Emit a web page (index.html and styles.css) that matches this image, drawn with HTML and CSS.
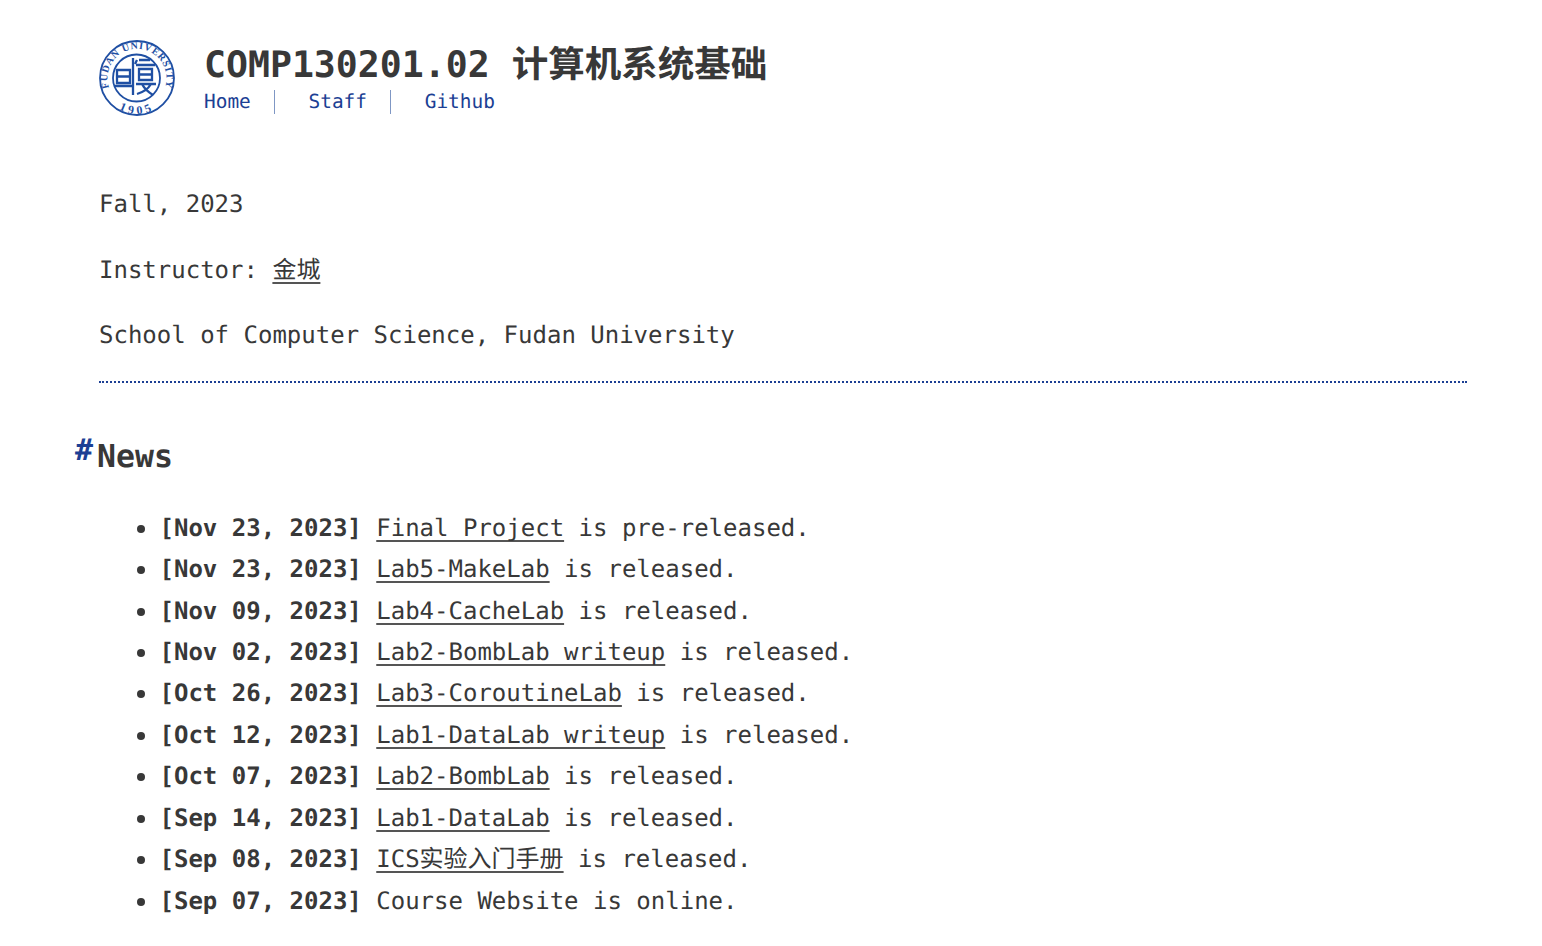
FILE: index.html
```html
<!DOCTYPE html>
<html lang="en">
<head>
    <meta charset="UTF-8">
    <title>COMP130201.02</title>
    <link rel="stylesheet" href="styles.css">
</head>
<body>
<div class="container">
    <div class="head">
        <svg class="logo" width="78" height="78" viewBox="0 0 78 78">
            <defs>
                <path id="arc_top" d="M14 55 A29.500 29.500 0 1 1 64 55"/>
                <path id="arc_bottom" d="M15 66 A36 36 0 0 0 63 66"/>
            </defs>
            <circle cx="39" cy="39" r="37" fill="none" stroke="#1f4fa3" stroke-width="1.800"/>
            <circle cx="38.500" cy="39" r="23.500" fill="none" stroke="#1f4fa3" stroke-width="1.800"/>
            <text class="seal_text"><textPath href="#arc_top" startOffset="50%" text-anchor="middle">FUDAN UNIVERSITY</textPath></text>
            <text class="seal_year"><textPath href="#arc_bottom" startOffset="50%" text-anchor="middle">1905</textPath></text>
            <g fill="none" stroke="#1f4fa3" stroke-width="2.300">
                <path d="M19 31 H32 V44 H19 Z M19 37.500 H32 M17 47 H34"/>
                <path d="M35 19 V56"/>
                <path d="M39 21 L37 25 M41 21 H52 M38 26 H57"/>
                <path d="M41 30 H54 V41 H41 Z M41 35.500 H54"/>
                <path d="M38 45 H58 M44 45 Q47 51 55 56 M53 45 Q49 52 39 55"/>
            </g>
        </svg>
        <div class="head_text">
            <h1 class="title">COMP130201.02 计算机系统基础</h1>
            <div class="nav">
                <a class="nav_item" href="#">Home</a>
                <a class="nav_item" href="#">Staff</a>
                <a class="nav_item" href="#">Github</a>
            </div>
        </div>
    </div>

    <div class="content">
        <p>Fall, 2023</p>
        <p>Instructor: <a href="#">金城</a></p>
        <p>School of Computer Science, Fudan University</p>
        <hr class="rule">

        <h2 class="section"><span class="hash">#</span>News</h2>
        <ul class="news">
            <li><b>[Nov 23, 2023]</b> <a href="#">Final Project</a> is pre-released.</li>
            <li><b>[Nov 23, 2023]</b> <a href="#">Lab5-MakeLab</a> is released.</li>
            <li><b>[Nov 09, 2023]</b> <a href="#">Lab4-CacheLab</a> is released.</li>
            <li><b>[Nov 02, 2023]</b> <a href="#">Lab2-BombLab writeup</a> is released.</li>
            <li><b>[Oct 26, 2023]</b> <a href="#">Lab3-CoroutineLab</a> is released.</li>
            <li><b>[Oct 12, 2023]</b> <a href="#">Lab1-DataLab writeup</a> is released.</li>
            <li><b>[Oct 07, 2023]</b> <a href="#">Lab2-BombLab</a> is released.</li>
            <li><b>[Sep 14, 2023]</b> <a href="#">Lab1-DataLab</a> is released.</li>
            <li><b>[Sep 08, 2023]</b> <a href="#">ICS实验入门手册</a> is released.</li>
            <li><b>[Sep 07, 2023]</b> Course Website is online.</li>
        </ul>
    </div>
</div>
</body>
</html>
```
FILE: styles.css
```css
html, body {
    margin: 0;
    padding: 0;
    background: #fff;
}

body {
    font-family: "DejaVu Sans Mono", "Noto Sans CJK SC", monospace;
    font-size: 24px;
    color: #383838;
    text-rendering: geometricPrecision;
}

.container {
    padding: 39px 75px 0 99px;
}

.head {
    display: flex;
    align-items: flex-start;
    gap: 28px;
}

.logo {
    flex: none;
    margin-left: -1px;
}

.seal_text {
    font-family: "Liberation Serif", serif;
    font-size: 10px;
    font-weight: bold;
    letter-spacing: 0.700px;
    fill: #1f4fa3;
}

.seal_year {
    font-family: "Liberation Serif", serif;
    font-size: 12px;
    font-weight: bold;
    letter-spacing: 3.500px;
    fill: #1f4fa3;
}

.title {
    margin: 1px 0 0;
    font-size: 36.500px;
    line-height: 50px;
    font-weight: bold;
}

.nav {
    display: flex;
    height: 24px;
    font-size: 19.450px;
    line-height: 24px;
}

.nav_item {
    color: #1c3f94;
    text-decoration: none;
    padding-right: 22.700px;
    margin-right: 34px;
    border-right: 1px solid #7f97c4;
}

.nav_item:last-child {
    border-right: none;
}

.content {
    padding-top: 73px;
}

.content p {
    margin: 0 0 37px;
    line-height: 28.500px;
}

.content a {
    color: inherit;
    text-decoration: underline 2px #555;
    text-underline-offset: 4px;
    text-decoration-skip-ink: none;
}

.rule {
    height: 0;
    margin: -6px 0 0;
    border: none;
    border-top: 2px dotted #1c3f94;
}

.section {
    position: relative;
    margin: 52px 0 0 -2px;
    font-size: 31.500px;
    line-height: 44px;
}

.hash {
    position: absolute;
    left: -22px;
    top: -6px;
    color: #1c3f94;
    font-size: 30px;
}

.news {
    margin: 29.200px 0 0;
    padding-left: 60.500px;
    list-style: none;
}

.news li {
    line-height: 41.440px;
}

.news li::before {
    content: "";
    display: inline-block;
    width: 8px;
    height: 8px;
    margin: 0 14.500px 3px -22.500px;
    border-radius: 50%;
    background: #383838;
}
```
